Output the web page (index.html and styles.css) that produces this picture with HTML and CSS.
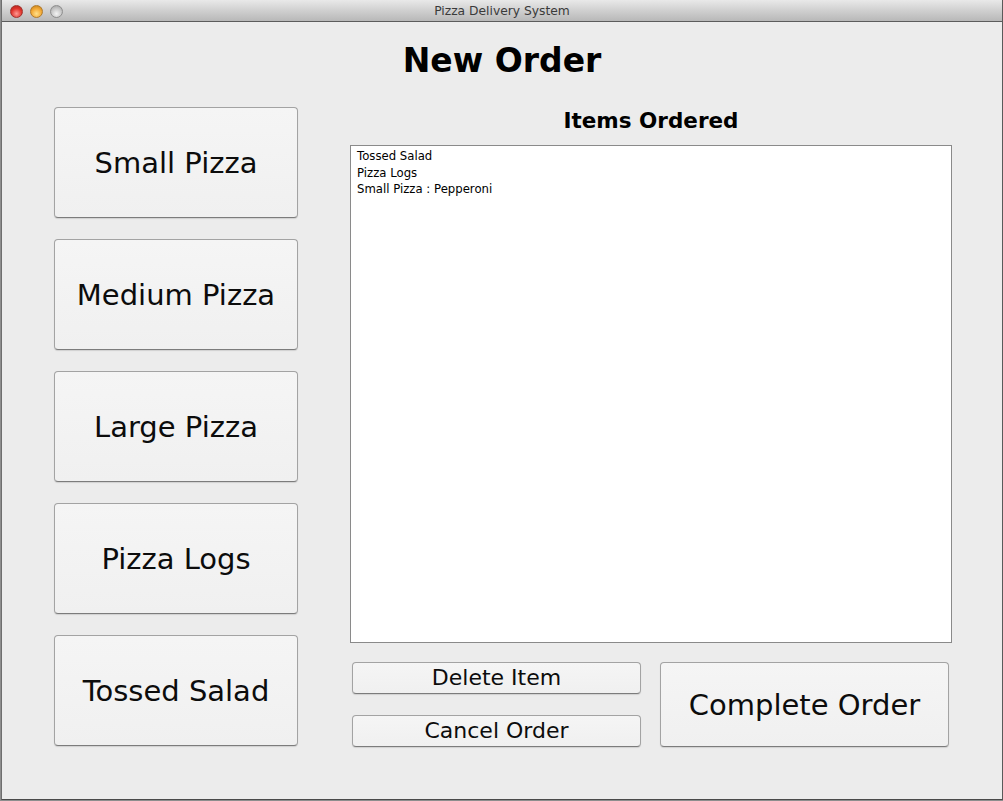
FILE: index.html
```html
<!DOCTYPE html>
<html>
<head>
<meta charset="utf-8">
<title>Pizza Delivery System</title>
<link rel="stylesheet" href="styles.css">
</head>
<body>
<div class="window">
  <div class="titlebar">
    <div class="lights">
      <span class="light red"></span>
      <span class="light yellow"></span>
      <span class="light grey"></span>
    </div>
    <div class="wintitle">Pizza Delivery System</div>
  </div>
  <div class="content">
    <h1 class="heading">New Order</h1>
    <div class="main">
      <div class="menu">
        <button class="btn big">Small Pizza</button>
        <button class="btn big">Medium Pizza</button>
        <button class="btn big">Large Pizza</button>
        <button class="btn big">Pizza Logs</button>
        <button class="btn big">Tossed Salad</button>
      </div>
      <div class="order">
        <h2 class="subheading">Items Ordered</h2>
        <div class="list">
          <div class="item">Tossed Salad</div>
          <div class="item">Pizza Logs</div>
          <div class="item">Small Pizza : Pepperoni</div>
        </div>
        <div class="actions">
          <div class="stack">
            <button class="btn small">Delete Item</button>
            <button class="btn small">Cancel Order</button>
          </div>
          <button class="btn big complete">Complete Order</button>
        </div>
      </div>
    </div>
  </div>
</div>
</body>
</html>
```
FILE: styles.css
```css
html, body {
  margin: 0;
  padding: 0;
}
body {
  background: #8e8e8e;
  width: 1003px;
  height: 801px;
  overflow: hidden;
  font-family: "DejaVu Sans", "Liberation Sans", sans-serif;
}
.window {
  margin-left: 1px;
  width: 1000px;
  height: 799px;
  background: #ececec;
  border-left: 1px solid #6e6e6e;
  border-right: 1px solid #5a5a5a;
  border-bottom: 1px solid #4a4a4a;
  display: flex;
  flex-direction: column;
}
.titlebar {
  height: 21px;
  border-bottom: 1px solid #5c5c5c;
  background: linear-gradient(#e9e9e9, #d2d2d2 45%, #b8b8b8);
  display: flex;
  align-items: center;
  position: relative;
}
.lights {
  display: flex;
  gap: 7px;
  padding-left: 8px;
  padding-top: 2px;
}
.light {
  width: 13px;
  height: 13px;
  border-radius: 50%;
  box-sizing: border-box;
}
.red {
  background: radial-gradient(circle at 50% 70%, #ff9a92, #e0342c 55%, #a82019);
  border: 1px solid #a0322d;
}
.yellow {
  background: radial-gradient(circle at 50% 70%, #ffe08a, #f2a834 55%, #b97815);
  border: 1px solid #b07a2a;
}
.grey {
  background: radial-gradient(circle at 50% 70%, #f4f4f4, #c6c6c6 55%, #9a9a9a);
  border: 1px solid #8e8e8e;
}
.wintitle {
  position: absolute;
  left: 0;
  right: 0;
  top: 3px;
  text-align: center;
  font-size: 12.3px;
  color: #3a3a3a;
  line-height: 16px;
}
.content {
  flex: 1;
  padding-left: 52px;
}
.heading {
  margin: 19px 0 0 -52px;
  font-size: 33px;
  line-height: 40px;
  font-weight: bold;
  text-align: center;
  color: #000;
}
.main {
  margin-top: 26px;
  display: flex;
  gap: 52px;
}
.menu {
  width: 244px;
  display: flex;
  flex-direction: column;
  gap: 21px;
}
.btn {
  font-family: "DejaVu Sans", "Liberation Sans", sans-serif;
  color: #0c0c0c;
  background: linear-gradient(#f5f5f5, #f0f0f0);
  border: 1px solid #a3a3a3;
  border-bottom-color: #7c7c7c;
  border-radius: 4px;
  box-shadow: 0 1px 1px rgba(0, 0, 0, 0.12);
  padding: 0;
  margin: 0;
  display: flex;
  align-items: center;
  justify-content: center;
  box-sizing: border-box;
}
.big {
  height: 111px;
  font-size: 29px;
  line-height: 34px;
}
.menu .big {
  width: 244px;
}
.order {
  width: 602px;
  display: flex;
  flex-direction: column;
}
.subheading {
  margin: 1px 0 0;
  font-size: 21.5px;
  line-height: 26px;
  font-weight: bold;
  text-align: center;
  color: #000;
}
.list {
  margin-top: 11px;
  height: 494px;
  background: #fff;
  border: 1px solid #8a8a8a;
  padding: 2px 6px 0;
  font-size: 11.7px;
  line-height: 16.7px;
  color: #000;
}
.actions {
  margin-top: 19px;
  padding: 0 3px 0 2px;
  display: flex;
  gap: 19px;
}
.stack {
  display: flex;
  flex-direction: column;
  gap: 21px;
}
.small {
  width: 289px;
  height: 32px;
  font-size: 22px;
  line-height: 26px;
}
.complete {
  width: 289px;
  height: 85px;
}
```
